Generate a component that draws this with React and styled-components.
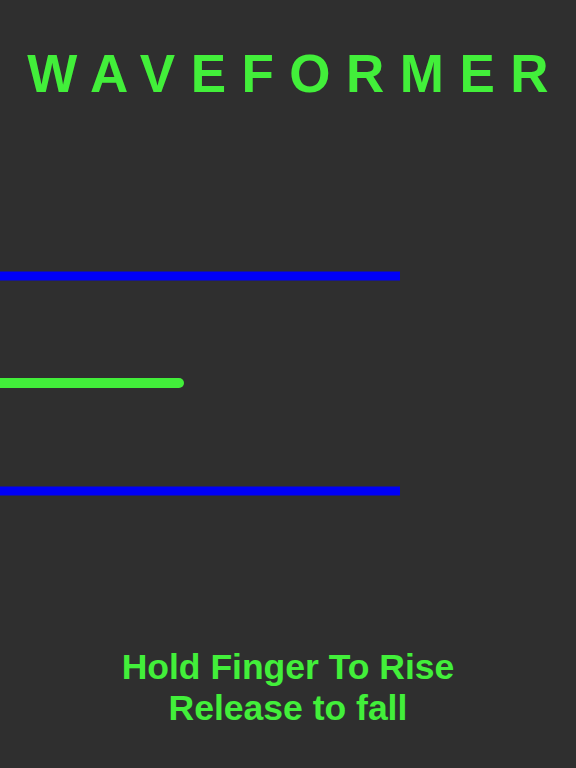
import React from "react";
import styled, { createGlobalStyle } from "styled-components";

const GlobalStyle = createGlobalStyle`
  html, body {
    margin: 0;
    padding: 0;
    background: #2f2f2f;
  }
  body {
    font-family: "Liberation Sans", Arial, sans-serif;
  }
`;

const GREEN = "#42ef3a";
const BLUE = "#0000f8";

// y = middle of each bar inside the play field, len = how far it reaches
const bars = [
  { y: 172, len: 400, color: BLUE, thick: 9, round: false },
  { y: 279, len: 184, color: GREEN, thick: 10, round: true },
  { y: 387, len: 400, color: BLUE, thick: 9, round: false },
];

export default function App() {
  return (
    <>
      <GlobalStyle />
      <Screen>
        <Title>WAVEFORMER</Title>
        <Field>
          <svg width="576" height="543" viewBox="0 0 576 543">
            {bars.map((b, i) => (
              <line
                key={i}
                x1={b.round ? -10 : 0}
                y1={b.y}
                x2={b.round ? b.len - b.thick / 2 : b.len}
                y2={b.y}
                stroke={b.color}
                strokeWidth={b.thick}
                strokeLinecap={b.round ? "round" : "butt"}
              />
            ))}
          </svg>
        </Field>
        <Hint>
          Hold Finger To Rise
          <br />
          Release to fall
        </Hint>
      </Screen>
    </>
  );
}

const Screen = styled.div`
  width: 576px;
  min-height: 768px;
  display: flex;
  flex-direction: column;
  align-items: center;
  background: #2f2f2f;
  overflow: hidden;
`;

const Title = styled.h1`
  margin: 44px 0 0;
  padding-left: 15.5px;
  font-size: 53px;
  line-height: 60px;
  font-weight: 700;
  letter-spacing: 15.5px;
  color: ${GREEN};
`;

const Field = styled.div`
  width: 100%;
  height: 543px;
  display: flex;

  svg {
    display: block;
  }
`;

const Hint = styled.p`
  margin: 0;
  font-size: 35.5px;
  line-height: 41px;
  font-weight: 700;
  text-align: center;
  color: ${GREEN};
`;
